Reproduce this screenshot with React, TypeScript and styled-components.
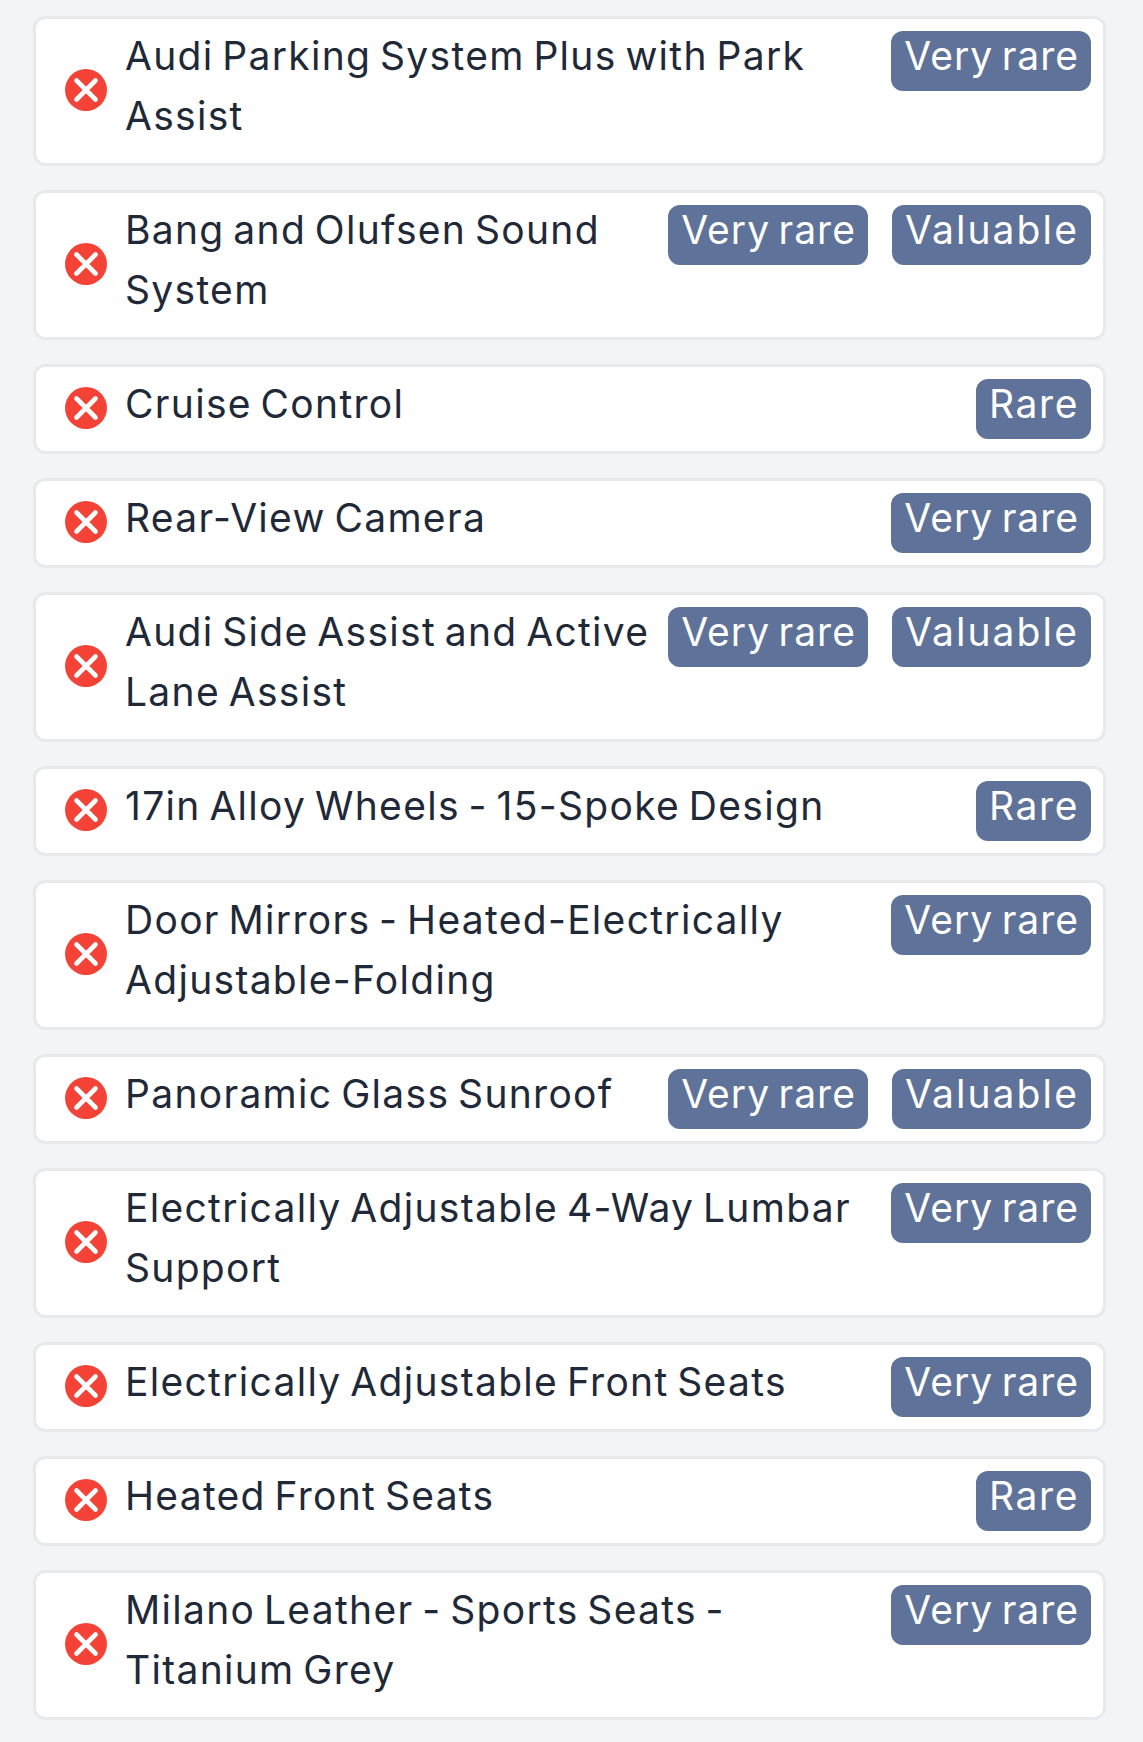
import React from "react";
import styled, { createGlobalStyle } from "styled-components";

const Global = createGlobalStyle`
  html, body { margin: 0; padding: 0; background: #f3f4f6; }
  body { font-family: "Inter", "Noto Sans", sans-serif; }
`;

const List = styled.ul`
  list-style: none;
  margin: 0;
  padding: 16px 37px 18px 33px;
  display: flex;
  flex-direction: column;
  gap: 24px;
`;

const Card = styled.li`
  display: flex;
  align-items: center;
  box-sizing: border-box;
  background: #fff;
  border: 3px solid #e7e9ed;
  border-radius: 12px;
  padding: 12px 12px 12px 28px;
`;

const Icon = styled.svg`
  flex: none;
  width: 44px;
  height: 44px;
  margin: 0 17px 2px 0;
`;

const Body = styled.div`
  flex: 1;
  align-self: flex-start;
  display: flex;
  justify-content: space-between;
  align-items: flex-start;
  min-width: 0;
`;

const Label = styled.span`
  display: block;
  font-size: 39px;
  line-height: 60px;
  margin: -5px 0 5px;
  color: #1f2937;
  letter-spacing: 1.3px;
  word-spacing: -3.5px;
`;

const Badges = styled.div`
  flex: none;
  display: flex;
  gap: 24px;
`;

const Badge = styled.span<{ $tracking: number }>`
  display: block;
  height: 60px;
  box-sizing: border-box;
  padding: 0 12px 0 13px;
  background: #5f7299;
  border-radius: 12px;
  color: #fff;
  font-size: 39px;
  line-height: 50px;
  letter-spacing: ${(p) => p.$tracking}px;
  word-spacing: -3.5px;
  white-space: nowrap;
`;

const tracking: Record<string, number> = { "Very rare": 1, Valuable: 2.1, Rare: 1.6 };

const rows: { lines: string[]; badges: string[] }[] = [
  { lines: ["Audi Parking System Plus with Park", "Assist"], badges: ["Very rare"] },
  { lines: ["Bang and Olufsen Sound", "System"], badges: ["Very rare", "Valuable"] },
  { lines: ["Cruise Control"], badges: ["Rare"] },
  { lines: ["Rear-View Camera"], badges: ["Very rare"] },
  { lines: ["Audi Side Assist and Active", "Lane Assist"], badges: ["Very rare", "Valuable"] },
  { lines: ["17in Alloy Wheels - 15-Spoke Design"], badges: ["Rare"] },
  { lines: ["Door Mirrors - Heated-Electrically", "Adjustable-Folding"], badges: ["Very rare"] },
  { lines: ["Panoramic Glass Sunroof"], badges: ["Very rare", "Valuable"] },
  { lines: ["Electrically Adjustable 4-Way Lumbar", "Support"], badges: ["Very rare"] },
  { lines: ["Electrically Adjustable Front Seats"], badges: ["Very rare"] },
  { lines: ["Heated Front Seats"], badges: ["Rare"] },
  { lines: ["Milano Leather - Sports Seats -", "Titanium Grey"], badges: ["Very rare"] },
];

const CrossIcon = () => (
  <Icon viewBox="0 0 44 44" aria-hidden="true">
    <circle cx="22" cy="22" r="21" fill="#f44336" />
    <path d="M12.5 12.5 L31.5 31.5 M31.5 12.5 L12.5 31.5" stroke="#fff" strokeWidth="4.6" strokeLinecap="round" />
  </Icon>
);

export default function App() {
  return (
    <>
      <Global />
      <List>
        {rows.map((r) => (
          <Card key={r.lines[0]}>
            <CrossIcon />
            <Body>
              <Label>
                {r.lines.map((l, i) => (
                  <React.Fragment key={l}>
                    {i > 0 && <br />}
                    {l}
                  </React.Fragment>
                ))}
              </Label>
              <Badges>
                {r.badges.map((b) => (
                  <Badge key={b} $tracking={tracking[b]}>
                    {b}
                  </Badge>
                ))}
              </Badges>
            </Body>
          </Card>
        ))}
      </List>
    </>
  );
}
